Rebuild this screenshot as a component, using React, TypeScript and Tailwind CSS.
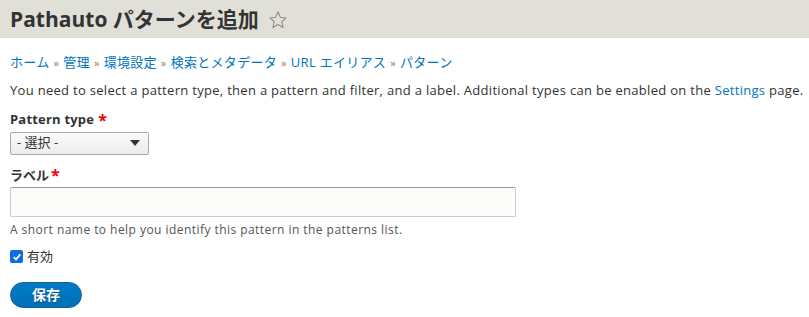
export default function App() {
  const font = { fontFamily: '"Open Sans", "Noto Sans CJK JP", sans-serif' };
  const sep = <span className="text-[#8b7b5e] text-[11px]">»</span>;
  return (
    <div className="min-h-screen bg-white text-[#333] text-[13px]" style={font}>
      <div className="h-[38px] bg-[#e0e0d8] flex items-center px-[10px]">
        <h1 className="text-[21px] font-bold text-[#333] leading-none flex items-center gap-[9px]">
          Pathauto パターンを追加
          <svg width="20" height="20" viewBox="0 0 24 24" className="mt-[1px]">
            <path d="M12 2.5l2.9 6.3 6.8.7-5.1 4.6 1.5 6.8L12 17.4l-6.1 3.5 1.5-6.8-5.1-4.6 6.8-.7z" fill="none" stroke="#8e8e84" strokeWidth="1.3" strokeLinejoin="round" />
          </svg>
        </h1>
      </div>
      <div className="px-[10px]">
        <div className="mt-[15px] text-[#0074bd] flex items-center gap-[4px] tracking-[0.3px] whitespace-nowrap">
          <a>ホーム</a>{sep}
          <a>管理</a>{sep}
          <a>環境設定</a>{sep}
          <a>検索とメタデータ</a>{sep}
          <a>URL エイリアス</a>{sep}
          <a>パターン</a>
        </div>
        <p className="mt-[8px] whitespace-nowrap tracking-[0.3px]">
          You need to select a pattern type, then a pattern and filter, and a label. Additional types can be enabled on the <a className="text-[#0074bd]">Settings</a> page.
        </p>
        <div className="mt-[10px]">
          <label className="font-bold flex items-center tracking-[0.2px]">Pattern type<span className="text-[#e00] ml-[4px] text-[16px] leading-none">*</span></label>
          <div className="mt-[2px] w-[139px] h-[23px] border border-[#aaa] rounded-[2px] bg-gradient-to-b from-[#fafafa] to-[#ececec] flex items-center justify-between pl-[6px] pr-[8px]">
            <span>- 選択 -</span>
            <svg width="10" height="6" viewBox="0 0 10 6"><path d="M0 0h10L5 6z" fill="#333" /></svg>
          </div>
        </div>
        <div className="mt-[11px]">
          <label className="font-bold flex items-center">ラベル<span className="text-[#e00] ml-[2px] text-[16px] leading-none">*</span></label>
          <div className="mt-[2px] w-[506px] h-[30px] border border-[#ccc] border-t-[#999] rounded-[2px] bg-[#fcfcfa]" />
          <p className="mt-[4px] text-[12px] text-[#555] tracking-[0.45px] whitespace-nowrap">A short name to help you identify this pattern in the patterns list.</p>
        </div>
        <div className="mt-[8px] flex items-center gap-[4px]">
          <span className="w-[13px] h-[13px] rounded-[2px] bg-[#0b6ee4] flex items-center justify-center">
            <svg width="10" height="10" viewBox="0 0 10 10"><path d="M1.8 5.2l2.2 2.2 4.3-5" fill="none" stroke="white" strokeWidth="1.8" /></svg>
          </span>
          <span>有効</span>
        </div>
        <button className="mt-[15px] w-[72px] h-[26px] rounded-full bg-gradient-to-b from-[#007bc6] to-[#0071b8] border border-[#1e5c90] text-white font-bold text-[14px] leading-none [text-shadow:0_1px_1px_#0a4d7a]">
          保存
        </button>
      </div>
    </div>
  );
}
